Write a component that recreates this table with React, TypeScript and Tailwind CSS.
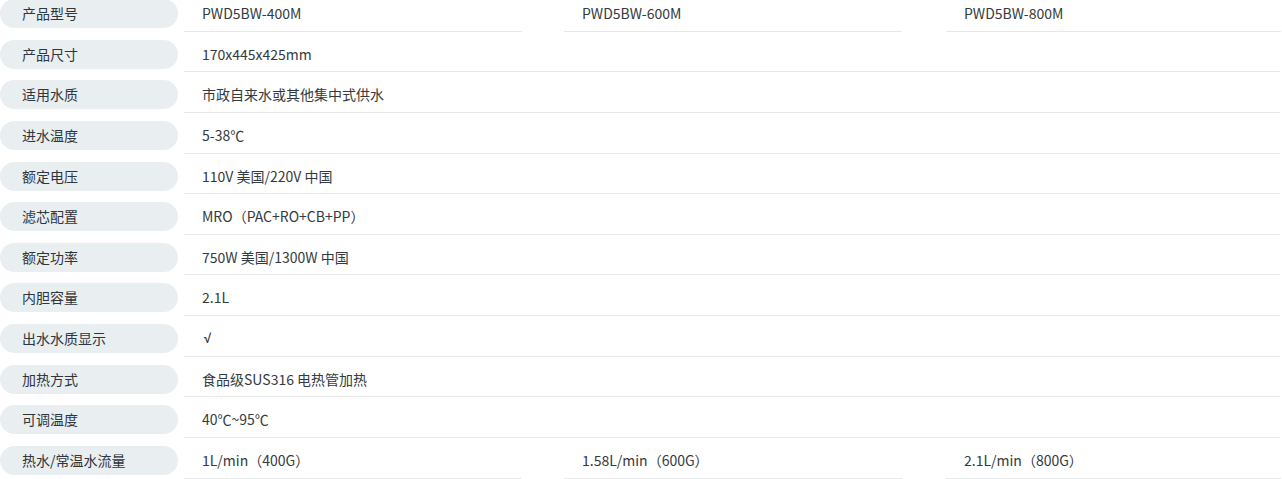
const Rows: { label: string; values: string[] }[] = [
  { label: "产品型号", values: ["PWD5BW-400M", "PWD5BW-600M", "PWD5BW-800M"] },
  { label: "产品尺寸", values: ["170x445x425mm"] },
  { label: "适用水质", values: ["市政自来水或其他集中式供水"] },
  { label: "进水温度", values: ["5-38℃"] },
  { label: "额定电压", values: ["110V 美国/220V 中国"] },
  { label: "滤芯配置", values: ["MRO（PAC+RO+CB+PP）"] },
  { label: "额定功率", values: ["750W 美国/1300W 中国"] },
  { label: "内胆容量", values: ["2.1L"] },
  { label: "出水水质显示", values: ["√"] },
  { label: "加热方式", values: ["食品级SUS316 电热管加热"] },
  { label: "可调温度", values: ["40℃~95℃"] },
  { label: "热水/常温水流量", values: ["1L/min（400G）", "1.58L/min（600G）", "2.1L/min（800G）"] },
];

const colWidths = ["w-[338px]", "w-[338px]", "w-[335px]"];
const colGaps = ["", "ml-[42px]", "ml-[44px]"];

function Cell({ text, className }: { text: string; className: string }) {
  return (
    <div className={`h-full border-b border-[#e6e8ea] pt-2 ${className}`}>
      <div className="h-[29px] flex items-center pl-[18px] text-[#333a40]">
        {text === "√" ? (
          <span className="pl-[2px] font-bold text-[13px]" style={{ fontFamily: '"Liberation Sans", sans-serif' }}>
            √
          </span>
        ) : (
          text
        )}
      </div>
    </div>
  );
}

export default function App() {
  return (
    <div
      className="w-[1282px] bg-white overflow-hidden h-[479px] text-[14px]"
      style={{ fontFamily: '"Noto Sans CJK SC", "Noto Sans", sans-serif' }}
    >
      <div className="-mt-[9px]">
        {Rows.map((row, i) => (
          <div key={i} className="flex items-start h-[40.64px]">
            <div className="mt-2 h-[29px] w-[178px] shrink-0 rounded-full bg-[#e9eef1] flex items-center pl-[22px] text-[#2e353b]">
              {row.label}
            </div>
            <div className="ml-[6px] flex h-full">
              {row.values.length === 1 ? (
                <Cell text={row.values[0]} className="w-[1096px]" />
              ) : (
                row.values.map((v, j) => (
                  <Cell key={j} text={v} className={`${colWidths[j]} ${colGaps[j]}`} />
                ))
              )}
            </div>
          </div>
        ))}
      </div>
    </div>
  );
}
